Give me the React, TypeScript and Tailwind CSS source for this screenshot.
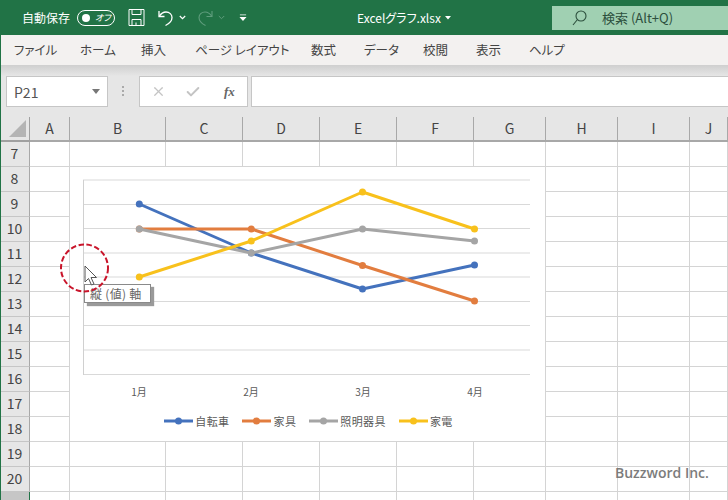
import { X, Check } from 'lucide-react';

const FONT = "font-['Noto_Sans_CJK_JP','Noto_Sans',sans-serif]";

const columns = ['A', 'B', 'C', 'D', 'E', 'F', 'G', 'H', 'I', 'J'];
const rows = [7, 8, 9, 10, 11, 12, 13, 14, 15, 16, 17, 18, 19, 20, 21];
const tabs = [
    { label: 'ファイル', className: 'w-[80px] pl-[14px]' },
    { label: 'ホーム', className: 'w-[61px]' },
    { label: '挿入', className: 'w-[54px]' },
    { label: 'ページ レイアウト', className: 'w-[116px]' },
    { label: '数式', className: 'w-[53px]' },
    { label: 'データ', className: 'w-[59px]' },
    { label: '校閲', className: 'w-[53px]' },
    { label: '表示', className: 'w-[53px]' },
    { label: 'ヘルプ', className: '' },
];

const gridLines = [180, 204.5, 228.5, 253, 277, 301.5, 325.5, 350, 374.5];
const series = [
    { name: '自転車', color: '#4472bd', y: [204, 253, 289, 265] },
    { name: '家具', color: '#e27d3f', y: [229, 229, 265.5, 301] },
    { name: '照明器具', color: '#a5a5a5', y: [229, 253, 229, 241] },
    { name: '家電', color: '#f8c11c', y: [277, 241, 192, 229] },
];
const pointX = [139.3, 251.3, 362.5, 474.5];

const TitleBar = () => (
    <div className="flex h-[35px] items-center bg-[#217346] text-white">
        <span className="ml-[22px] w-[55px] text-[12px] leading-none">自動保存</span>
        <div className="flex h-[16px] w-[38px] items-center rounded-full border border-white pl-[4px]">
            <span className="h-[8px] w-[8px] rounded-full bg-white" />
            <span className="ml-[5px] text-[9px] italic leading-none">オフ</span>
        </div>
        <svg className="ml-[13px]" width="17" height="17" viewBox="0 0 17 17" fill="none" stroke="#fff" strokeWidth="1">
            <path d="M1 .5h15v16H1z" />
            <path d="M4 .5v5h9v-5M4 16.5v-6h9v6M8 16.5v-3" />
        </svg>
        <svg className="ml-[12px]" width="18" height="18" viewBox="0 0 18 18" fill="none" stroke="#fff" strokeWidth="1.3">
            <path d="M2 2v5.500h5.500" />
            <path d="M2.300 7.300C4 4.500 6 3 9 3c3.500 0 6 2.500 6 5.500 0 3.500-2.500 6-6.500 8" />
        </svg>
        <svg className="ml-[4px]" width="7" height="5" viewBox="0 0 7 5" fill="none" stroke="#fff" strokeWidth="1.2">
            <path d="M.8 1l2.700 2.700L6.200 1" />
        </svg>
        <svg className="ml-[10px]" width="18" height="18" viewBox="0 0 18 18" fill="none" stroke="#5f9d7d" strokeWidth="1.1">
            <path d="M16 2v5.500h-5.500" />
            <path d="M15.700 7.300C14 4.500 12 3 9 3 5.500 3 3 5.500 3 8.500c0 3.500 2.500 6 6.500 8" />
        </svg>
        <svg className="ml-[4px]" width="7" height="5" viewBox="0 0 7 5" fill="none" stroke="#5f9d7d" strokeWidth="1">
            <path d="M.8 1l2.700 2.700L6.200 1" />
        </svg>
        <svg className="ml-[14px]" width="8" height="8" viewBox="0 0 9 8" fill="#fff">
            <path d="M1 0h7v1H1zM.5 3h8L4.500 7.500z" />
        </svg>
        <span className="ml-[110px] w-[82px] whitespace-nowrap text-[12px] leading-none">Excelグラフ.xlsx</span>
        <svg className="ml-[6px] mt-[1px]" width="6" height="4" viewBox="0 0 6 4" fill="#fff">
            <path d="M0 0h6L3 3.500z" />
        </svg>
        <div className="ml-[101px] flex h-[24px] flex-1 items-center bg-[#a0d0b2] text-[#2c4f3d]">
            <svg className="ml-[20px]" width="15" height="16" viewBox="0 0 15 16" fill="none" stroke="#2c4f3d" strokeWidth="1.1">
                <circle cx="9" cy="6" r="5" />
                <path d="M5.500 9.500L1 15" />
            </svg>
            <span className="ml-[15px] text-[13px] leading-none">検索 (Alt+Q)</span>
        </div>
    </div>
);

const RibbonTabs = () => (
    <div className="flex h-[30px] items-center bg-[#f3f1f0] text-[12.500px] leading-none text-[#444]">
        {tabs.map((tab) => (
            <span key={tab.label} className={`shrink-0 ${tab.className}`}>{tab.label}</span>
        ))}
    </div>
);

const FormulaBar = () => (
    <div className="flex h-[41px] items-start bg-[#e6e6e6] pl-[6px]">
        <div className="flex h-[31px] w-[102px] items-center justify-between border border-[#c6c6c6] bg-white pl-[7px] pr-[7px]">
            <span className="text-[14px] leading-none text-[#555]">P21</span>
            <svg width="8" height="5" viewBox="0 0 8 5" fill="#777">
                <path d="M0 0h8L4 5z" />
            </svg>
        </div>
        <div className="ml-[14px] mt-[10px] flex w-[3px] flex-col gap-[2px]">
            <span className="h-[2px] w-[2px] bg-[#aaa]" />
            <span className="h-[2px] w-[2px] bg-[#aaa]" />
            <span className="h-[2px] w-[2px] bg-[#aaa]" />
        </div>
        <div className="ml-[14px] flex h-[31px] w-[109px] items-center border border-[#c6c6c6] bg-white pl-[11px]">
            <X size={15} strokeWidth={2} color="#c4c4c4" />
            <Check size={16} strokeWidth={3} color="#c4c4c4" className="ml-[19px]" />
            <span className="ml-[23px] font-['Liberation_Serif',serif] text-[13px] font-bold italic leading-none text-[#666]">fx</span>
        </div>
        <div className="ml-[3px] h-[31px] flex-1 border-y border-l border-[#c6c6c6] bg-white" />
    </div>
);

const Sheet = () => (
    <div className="grid grid-cols-[30px_40px_96px_77px_77px_77px_77px_72px_72px_72px_1fr] grid-rows-[25px] auto-rows-[25px]">
        <div className="flex items-end justify-end border-r border-b-2 border-[#a0a0a0] bg-[#e6e6e6] pb-[3px] pr-[2px]">
            <svg width="17" height="17" viewBox="0 0 17 17" className="mr-[1px]">
                <path d="M17 0v17H0z" fill="#b4b4b4" />
            </svg>
        </div>
        {columns.map((c) => (
            <div key={c} className="flex items-center justify-center border-r border-b-2 border-[#a8a8a8] bg-[#e6e6e6] pb-[1px] text-[14px] leading-none text-[#444]">
                {c}
            </div>
        ))}
        {rows.map((r) => (
            <div key={r} className="contents">
                <div className={`flex items-center justify-center border-r pb-[2px] text-[14px] leading-none ${r === 21 ? 'border-[#217346] bg-[#c6c6c6] text-[#217346]' : 'border-b border-[#a8a8a8] border-b-[#c6c6c6] bg-[#e6e6e6] text-[#444]'}`}>
                    {r}
                </div>
                {columns.map((c) => (
                    <div key={c} className="border-r border-b border-[#d4d4d4] bg-white" />
                ))}
            </div>
        ))}
    </div>
);

const Chart = () => (
    <div className="absolute left-[70px] top-[167px] flex h-[274px] w-[475px] flex-col bg-white">
        <svg width="475" height="210" viewBox="70 167 475 210" className="shrink-0">
            {gridLines.map((y) => (
                <line key={y} x1="83" x2="530" y1={y} y2={y} stroke="#d9d9d9" strokeWidth="1" />
            ))}
            <line x1="83.500" x2="83.500" y1="180" y2="375" stroke="#d0d0d0" strokeWidth="1" />
            {series.map((s) => (
                <g key={s.name}>
                    <polyline
                        points={s.y.map((y, i) => `${pointX[i]},${y}`).join(' ')}
                        fill="none"
                        stroke={s.color}
                        strokeWidth="3"
                        strokeLinejoin="round"
                    />
                    {s.y.map((y, i) => (
                        <circle key={i} cx={pointX[i]} cy={y} r="3.500" fill={s.color} />
                    ))}
                </g>
            ))}
        </svg>
        <div className="grid h-[30px] grid-cols-[112px_112px_112px_112px] items-center pl-[13px] text-[10px] leading-none text-[#595959]">
            {['1月', '2月', '3月', '4月'].map((m) => (
                <span key={m} className="text-center">{m}</span>
            ))}
        </div>
        <div className="flex h-[28px] items-center justify-center gap-[13px] pl-[2px] text-[11px] leading-none tracking-[0.4px] text-[#595959]">
            {series.map((s) => (
                <div key={s.name} className="flex items-center gap-[2px]">
                    <svg width="29" height="8" viewBox="0 0 29 8">
                        <line x1="0" x2="29" y1="4" y2="4" stroke={s.color} strokeWidth="3" />
                        <circle cx="14.500" cy="4" r="3.500" fill={s.color} />
                    </svg>
                    <span>{s.name}</span>
                </div>
            ))}
        </div>
    </div>
);

export default function App() {
    return (
        <div className={`relative h-[500px] w-[728px] overflow-hidden bg-white [font-feature-settings:'palt'] ${FONT}`}>
            <TitleBar />
            <RibbonTabs />
            {/* shadow under the ribbon */}
            <div className="h-[11px] bg-gradient-to-b from-[#cfcfcf] to-[#e6e6e6]" />
            <FormulaBar />
            <Sheet />
            <Chart />

            {/* window edge */}
            <div className="absolute bottom-0 left-0 top-[35px] w-px bg-[#217346]" />

            {/* tooltip + marker */}
            <div className="absolute left-[84px] top-[284px] h-[19px] w-[67px] whitespace-nowrap border border-[#8a8a8a] bg-white pl-[5px] text-[12px] leading-[17px] tracking-[0.3px] text-[#666] shadow-[3px_3px_1px_#9a9a9a]">
                縦 (値) 軸
            </div>
            <svg className="absolute left-[59px] top-[243px]" width="51" height="51" viewBox="0 0 51 51" fill="none">
                <circle cx="25.500" cy="25" r="23.500" stroke="#c9152b" strokeWidth="2" strokeDasharray="5.500 2.500" />
            </svg>
            <svg className="absolute left-[84px] top-[265px]" width="14" height="22" viewBox="0 0 14 22">
                <path d="M1 1v16l3.500-3.500 3 6.500 2.500-1-3-6.500H12.500z" fill="#fff" stroke="#555" strokeWidth="1" strokeLinejoin="round" />
            </svg>

            <span className="absolute left-[615px] top-[463px] font-['Open_Sans',sans-serif] text-[14px] font-semibold leading-[20px] text-[#7c7c7c]">
                Buzzword Inc.
            </span>
        </div>
    );
}
